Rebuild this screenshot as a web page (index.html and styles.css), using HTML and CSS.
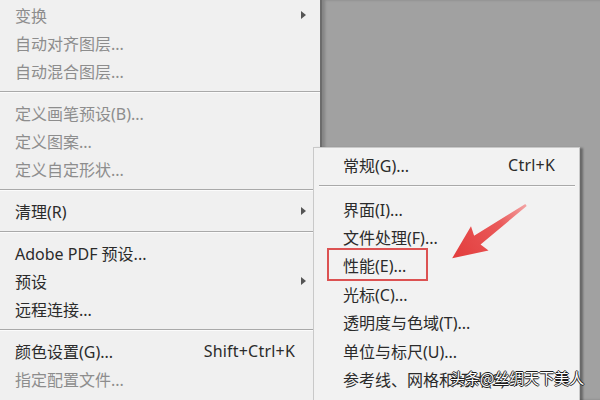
FILE: index.html
```html
<html lang="zh-CN">
<head>
    <meta charset="UTF-8">
    <meta name="viewport" content="width=device-width, initial-scale=1.0">
    <title>编辑菜单 - 首选项</title>
    <link rel="stylesheet" href="styles.css">
</head>
<body>

    <div class="screen">
        <div class="menu">
            <div class="item disabled has-sub"><span>变换</span><span></span><i class="chev"></i></div>
            <div class="item disabled"><span>自动对齐图层...</span></div>
            <div class="item disabled"><span>自动混合图层...</span></div>
            <div class="sep"></div>
            <div class="item disabled"><span>定义画笔预设(B)...</span></div>
            <div class="item disabled"><span>定义图案...</span></div>
            <div class="item disabled"><span>定义自定形状...</span></div>
            <div class="sep"></div>
            <div class="item has-sub"><span>清理(R)</span><span></span><i class="chev"></i></div>
            <div class="sep"></div>
            <div class="item"><span>Adobe PDF 预设...</span></div>
            <div class="item has-sub"><span>预设</span><span></span><i class="chev"></i></div>
            <div class="item"><span>远程连接...</span></div>
            <div class="sep"></div>
            <div class="item"><span>颜色设置(G)...</span><span class="key">Shift+Ctrl+K</span></div>
            <div class="item disabled"><span>指定配置文件...</span></div>
        </div>

        <div class="canvas"></div>

        <!-- 首选项 submenu -->
        <div class="submenu">
            <div class="item"><span>常规(G)...</span><span class="key">Ctrl+K</span></div>
            <div class="sep"></div>
            <div class="item"><span>界面(I)...</span></div>
            <div class="item"><span>文件处理(F)...</span></div>
            <div class="item"><span>性能(E)...</span></div>
            <div class="item"><span>光标(C)...</span></div>
            <div class="item"><span>透明度与色域(T)...</span></div>
            <div class="item"><span>单位与标尺(U)...</span></div>
            <div class="item"><span>参考线、网格和切片(S)...</span></div>
        </div>

        <div class="mark"></div>

        <svg class="pointer" width="600" height="400" viewBox="0 0 600 400">
            <defs>
                <linearGradient id="arrowFill" x1="0" y1="0" x2="1" y2="0">
                    <stop offset="0" stop-color="#f3a3a3"/>
                    <stop offset="0.35" stop-color="#ea5a5a"/>
                    <stop offset="1" stop-color="#e23c3c"/>
                </linearGradient>
            </defs>
            <g transform="translate(526 205) rotate(144.2)">
                <polygon fill="url(#arrowFill)" points="0,-1.2 60,-5.5 57,-15 91,0 57,15 60,5.5 0,1.2"/>
            </g>
        </svg>

        <div class="watermark">头条@丝绸天下美人</div>
    </div>

</body>
</html>
```

FILE: styles.css
```css
:root {
    --menu-bg: #f0f0f0;
    --text: #2b2b2b;
    --text-off: #8d8d8d;
    --line: #a9a9a9;
    --desk: #a1a1a1;
    --mark: #dc5252;
}

body {
    margin: 0;
    background: var(--desk);
    font-family: 'Noto Sans', 'Noto Sans CJK SC', sans-serif;
    font-size: 16px;
    color: var(--text);
}

.screen {
    position: relative;
    display: flex;
    width: 600px;
    height: 400px;
    overflow: hidden;
}

.menu {
    width: 320px;
    flex-shrink: 0;
    padding-top: 1px;
    background: var(--menu-bg);
    border-right: 2px solid #6c6c6c;
}

.canvas {
    flex: 1;
    background: var(--desk);
    box-shadow: inset 3px 0 3px rgba(0, 0, 0, 0.18);
}

.item {
    display: grid;
    grid-template-columns: 1fr auto 25px;
    align-items: center;
    height: 28px;
    padding-left: 15px;
    white-space: nowrap;
}

.item.disabled {
    color: var(--text-off);
}

.key {
    letter-spacing: 0.2px;
}

.chev {
    justify-self: start;
    margin-left: 6px;
    width: 0;
    height: 0;
    border-left: 5px solid #555;
    border-top: 4px solid transparent;
    border-bottom: 4px solid transparent;
}

.sep {
    margin: 6px 0;
    border-top: 1px solid var(--line);
    border-bottom: 1px solid #fbfbfb;
}

.submenu {
    position: absolute;
    left: 313px;
    top: 147px;
    width: 265px;
    height: 270px;
    padding-top: 3px;
    background: #f2f2f2;
    border: 1px solid #c9c9c9;
    box-shadow: 3px 1px 2px rgba(0, 0, 0, 0.35);
}

.submenu .item {
    grid-template-columns: 1fr auto;
    height: 28.4px;
    padding-left: 29px;
    padding-right: 24px;
}

.submenu .sep {
    margin: 6px 4px 7px 5px;
}

.mark {
    position: absolute;
    left: 327px;
    top: 248px;
    width: 97px;
    height: 29px;
    border: 2px solid var(--mark);
}

.pointer {
    position: absolute;
    left: 0;
    top: 0;
    pointer-events: none;
}

.watermark {
    position: absolute;
    left: 450px;
    top: 367px;
    font-family: 'Noto Sans CJK SC', sans-serif;
    font-size: 15px;
    line-height: 22px;
    color: #fff;
    text-shadow: -1px 0 #1e1e1e, 1px 0 #1e1e1e, 0 -1px #1e1e1e, 0 1px #1e1e1e;
}
```
